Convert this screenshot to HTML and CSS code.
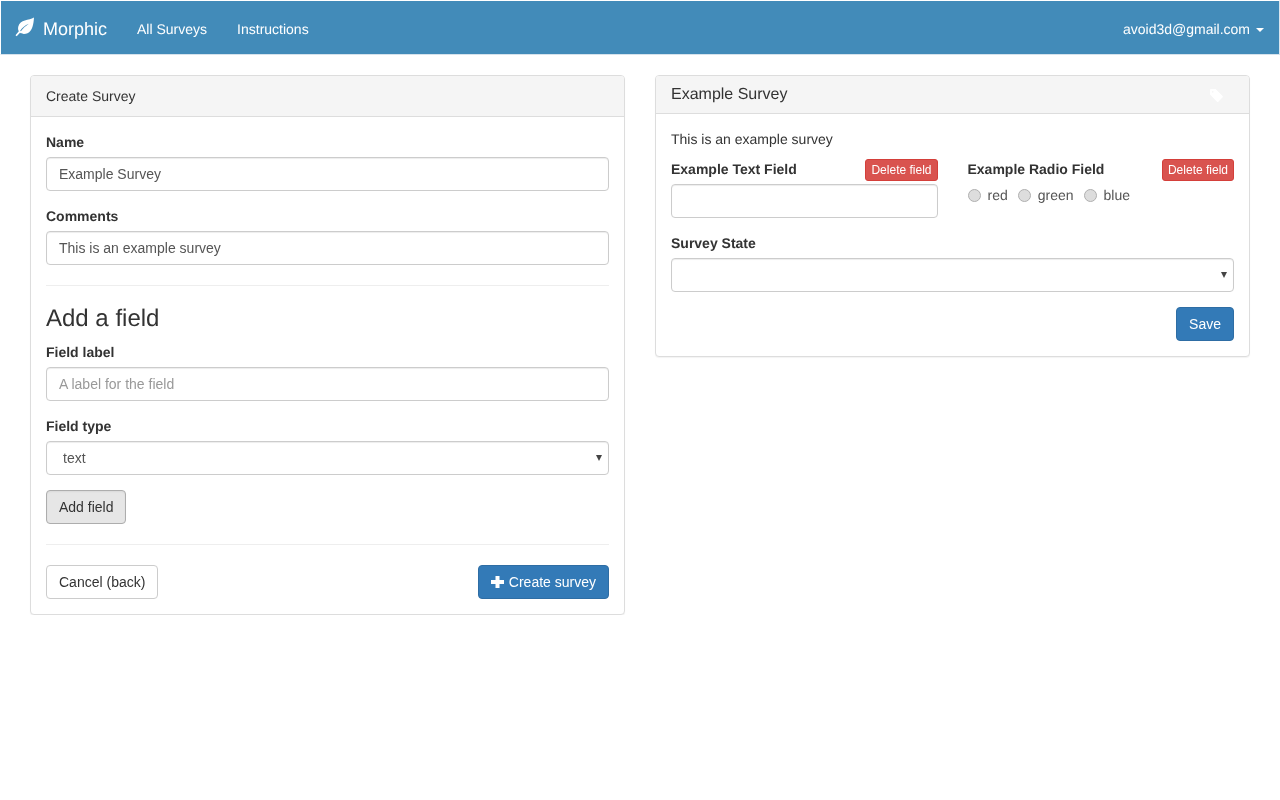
FILE: index.html
```html
<!DOCTYPE html>
<html lang="en">
<head>
<meta charset="utf-8">
<title>Morphic</title>
<link rel="stylesheet" href="styles.css">
</head>
<body>
<nav class="navbar">
  <a class="brand">
    <svg class="leaf" viewBox="0 0 20 20"><path d="M19 .5C14 3.500 5 2.500 3.300 9.500C2.800 11.500 3.100 13.200 3.800 14.300L.5 18.300L1.700 19.300L5 15.700C7 17.200 10 17.200 12.500 16.200C17.500 14.200 18.500 7 19 .5ZM5.200 13.700C7.300 10.500 10 8.500 13.800 6.800C10.700 9 8.300 11 5.900 14.300Z" fill="#fff" fill-rule="evenodd"/></svg>
    Morphic
  </a>
  <a class="nav-link">All Surveys</a>
  <a class="nav-link">Instructions</a>
  <a class="nav-user">avoid3d@gmail.com<span class="caret"></span></a>
</nav>
<main class="columns">
  <section class="col">
    <div class="panel">
      <div class="panel-heading">Create Survey</div>
      <form class="panel-body">
        <div class="form-group">
          <label class="label">Name</label>
          <input class="control" type="text" value="Example Survey">
        </div>
        <div class="form-group last">
          <label class="label">Comments</label>
          <input class="control" type="text" value="This is an example survey">
        </div>
        <hr class="rule">
        <h3 class="section-title">Add a field</h3>
        <div class="form-group">
          <label class="label">Field label</label>
          <input class="control" type="text" placeholder="A label for the field">
        </div>
        <div class="form-group">
          <label class="label">Field type</label>
          <div class="select-wrap">
            <select class="control select"><option>text</option></select>
          </div>
        </div>
        <button class="btn btn-active" type="button">Add field</button>
        <hr class="rule">
        <div class="actions">
          <button class="btn" type="button">Cancel (back)</button>
          <button class="btn btn-primary" type="button">
            <svg class="plus" viewBox="0 0 14 14"><path d="M4.500 1h4v4h4.500v4H8.500v4h-4V9H0V5h4.500z" fill="#fff"/></svg>
            Create survey
          </button>
        </div>
      </form>
    </div>
  </section>
  <section class="col">
    <div class="panel">
      <div class="panel-heading heading-title">
        <span>Example Survey</span>
        <svg class="tag" viewBox="0 0 14 14"><path d="M0 1.200C0 .5.500 0 1.200 0H6L13.600 7.600c.4.4.4 1 0 1.400L9 13.600c-.4.4-1 .4-1.400 0L0 6ZM3 2.200a.8.8 0 1 0 .01 0Z" fill="#fff" fill-rule="evenodd"/></svg>
      </div>
      <div class="panel-body">
        <p class="description">This is an example survey</p>
        <div class="field-row">
          <div class="field">
            <div class="field-head">
              <label class="label flush">Example Text Field</label>
              <button class="btn-delete" type="button">Delete field</button>
            </div>
            <input class="control" type="text">
          </div>
          <div class="field">
            <div class="field-head">
              <label class="label flush">Example Radio Field</label>
              <button class="btn-delete" type="button">Delete field</button>
            </div>
            <div class="radios">
              <label class="radio"><input type="radio" name="c">red</label>
              <label class="radio"><input type="radio" name="c">green</label>
              <label class="radio"><input type="radio" name="c">blue</label>
            </div>
          </div>
        </div>
        <div class="form-group">
          <label class="label">Survey State</label>
          <div class="select-wrap">
            <select class="control select"><option></option></select>
          </div>
        </div>
        <div class="save-row">
          <button class="btn btn-primary" type="button">Save</button>
        </div>
      </div>
    </div>
  </section>
</main>
</body>
</html>
```
FILE: styles.css
```css
* { box-sizing: border-box; }
html, body { margin: 0; padding: 0; }
body {
  font-family: "Liberation Sans", Arial, sans-serif;
  font-size: 14px;
  line-height: 20px;
  color: #333;
  background: #fff;
  text-rendering: geometricPrecision;
}
.navbar {
  display: flex;
  align-items: center;
  height: 55px;
  padding: 2px 15px 0;
  background: #428bb9;
  border: 1px solid;
  border-color: #fff #d9e6ef #d5e2ec #fff;
  color: #fff;
  will-change: transform;
}
.navbar a { color: #fff; }
.brand {
  display: flex;
  align-items: center;
  font-size: 18px;
  margin-right: 30px;
  margin-left: -1px;
}
.leaf { width: 20px; height: 20px; margin-right: 8px; margin-top: -3px; }
.nav-link { margin-right: 30px; padding-top: 1px; }
.nav-user { margin-left: auto; margin-right: 0; padding-top: 1px; }
.caret {
  display: inline-block;
  width: 0;
  height: 0;
  margin-left: 6px;
  vertical-align: middle;
  border-top: 4px solid #fff;
  border-left: 4px solid transparent;
  border-right: 4px solid transparent;
}
.columns {
  display: grid;
  grid-template-columns: 1fr 1fr;
  padding: 20px 15px 0;
  will-change: transform;
}
.col { padding: 0 15px; }
.panel {
  background: #fff;
  border: 1px solid #ddd;
  border-radius: 4px;
  box-shadow: 0 1px 1px rgba(0,0,0,.05);
}
.panel-heading {
  padding: 10px 15px;
  background: #f5f5f5;
  border-bottom: 1px solid #ddd;
  border-radius: 3px 3px 0 0;
}
.heading-title {
  display: flex;
  align-items: center;
  justify-content: space-between;
  height: 38px;
  font-size: 16px;
  line-height: 17px;
  padding: 9px 26px 10px 15px;
}
.tag { width: 13px; height: 13px; margin-top: 2px; }
.panel-body { padding: 15px; display: block; }
.form-group { margin-bottom: 15px; }
.form-group.last { margin-bottom: 20px; }
.label {
  display: block;
  font-weight: 700;
  margin-bottom: 5px;
}
.label.flush { margin: -2px 0 0; }
.control {
  display: block;
  width: 100%;
  height: 34px;
  padding: 6px 12px;
  font: inherit;
  color: #555;
  background: #fff;
  border: 1px solid #ccc;
  border-radius: 4px;
  box-shadow: inset 0 1px 1px rgba(0,0,0,.075);
}
.control::placeholder { color: #999; opacity: 1; }
.select-wrap { position: relative; }
.select { appearance: none; padding-left: 16px; }
.select-wrap::after {
  content: "";
  position: absolute;
  right: 7px;
  top: 14px;
  border-top: 6px solid #444;
  border-left: 3px solid transparent;
  border-right: 3px solid transparent;
}
.rule {
  height: 1px;
  margin: 20px 0;
  border: 0;
  background: #eee;
}
.section-title {
  margin: 0 0 11px;
  font-size: 24px;
  font-weight: 500;
  line-height: 25px;
}
.btn {
  display: inline-block;
  height: 34px;
  padding: 6px 12px;
  font: inherit;
  color: #333;
  background: #fff;
  border: 1px solid #ccc;
  border-radius: 4px;
}
.btn-active {
  background: #e6e6e6;
  border-color: #adadad;
  box-shadow: inset 0 1px 2px rgba(0,0,0,.06);
}
.btn-primary {
  color: #fff;
  background: #337ab7;
  border-color: #2e6da4;
}
.plus { width: 14px; height: 14px; vertical-align: -2px; }
.actions { display: flex; justify-content: space-between; }
.description { margin: 0 0 10px; }
.field-row {
  display: grid;
  grid-template-columns: 1fr 1fr;
  column-gap: 30px;
  margin-bottom: 15px;
}
.field-head {
  display: flex;
  align-items: center;
  justify-content: space-between;
  height: 22px;
  margin-bottom: 3px;
}
.btn-delete {
  height: 22px;
  padding: 1px 5px;
  font: inherit;
  font-size: 12px;
  line-height: 18px;
  color: #fff;
  background: #d9534f;
  border: 1px solid #d43f3a;
  border-radius: 3px;
}
.radios { display: flex; gap: 10px; margin-top: 4px; }
.radio { display: flex; align-items: center; color: #555; }
.radio input {
  appearance: none;
  width: 13px;
  height: 13px;
  margin: 0 7px 0 0;
  border: 1px solid #b0b0b0;
  border-radius: 50%;
  background: #ddd;
}
.save-row { display: flex; justify-content: flex-end; }
```
